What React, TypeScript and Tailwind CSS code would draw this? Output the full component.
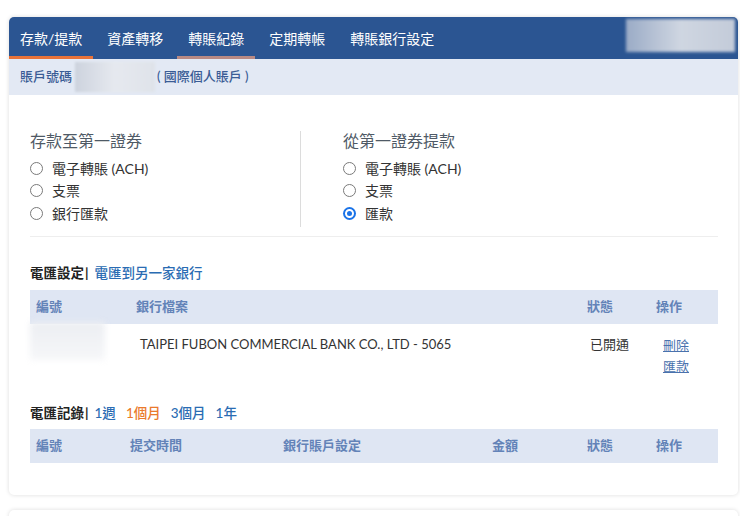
import React from "react";

const font = { fontFamily: 'Lato, "Noto Sans CJK TC", sans-serif' };

function Radio({ label, checked }: { label: string; checked?: boolean }) {
  return (
    <div className="flex items-center h-[22.5px]">
      {checked ? (
        <span className="w-[13px] h-[13px] rounded-full bg-[#1a73e8] flex items-center justify-center">
          <span className="w-[9px] h-[9px] rounded-full border-[2px] border-white bg-[#1a73e8]" />
        </span>
      ) : (
        <span className="w-[13px] h-[13px] rounded-full border border-[#7a7a7a] bg-white" />
      )}
      <span className="ml-[9px] text-[14px] text-[#333]">{label}</span>
    </div>
  );
}

export default function App() {
  const tabs = ["存款/提款", "資產轉移", "轉賬紀錄", "定期轉帳", "轉賬銀行設定"];
  return (
    <div className="w-[740px] h-[516px] bg-white overflow-hidden" style={font}>
      <div className="pt-[17px] pl-[9px] pr-[2px]">
        <div className="rounded-[5px] bg-white shadow-[0_0_4px_rgba(0,0,0,0.14)] overflow-hidden">
          {/* nav */}
          <div className="h-[42px] bg-[#2b5592] flex items-stretch gap-[3px] relative">
            {tabs.map((t, i) => (
              <div
                key={t}
                className={
                  "px-[11px] flex items-center text-[14px] text-white border-b-[3px] pt-[3px] " +
                  (i === 0
                    ? "border-[#e8733a]"
                    : i === 2
                    ? "border-[#b98a84]"
                    : "border-transparent")
                }
              >
                {t}
              </div>
            ))}
            <div className="flex-1" />
            <div className="mt-[2px] mr-[3px] w-[109px] h-[33px] bg-gradient-to-r from-[#9aabc6] via-[#cfd6e1] to-[#c3cbd9] blur-[1.5px]" />
          </div>
          {/* sub bar */}
          <div className="h-[36px] bg-[#e3e9f4] flex items-center pl-[11px] text-[13px] text-[#3a5c95] font-medium">
            <span>賬戶號碼</span>
            <span className="ml-[3px] w-[80px] h-[30px] bg-gradient-to-r from-[#cdd3de] via-[#e6e9ef] to-[#dfe3ea] blur-[1px]" />
            <span className="ml-[2px]">( 國際個人賬戶 )</span>
          </div>
          {/* body */}
          <div className="px-[21px] pr-[20px] pt-[36px] pb-[32px]">
            <div className="flex pb-[9px] border-b border-[#eeeeee]">
              <div className="w-[271px] border-r border-[#dcdcdc] pb-[2px]">
                <div className="text-[16px] text-[#4f5a66] leading-[20px] mb-[6px]">存款至第一證券</div>
                <Radio label="電子轉賬 (ACH)" />
                <Radio label="支票" />
                <Radio label="銀行匯款" />
              </div>
              <div className="pl-[42px]">
                <div className="text-[16px] text-[#4f5a66] leading-[20px] mb-[6px]">從第一證券提款</div>
                <Radio label="電子轉賬 (ACH)" />
                <Radio label="支票" />
                <Radio label="匯款" checked />
              </div>
            </div>

            {/* wire settings */}
            <div className="mt-[27px] flex items-center text-[13.5px] leading-[18px]">
              <span className="font-bold text-[#222]">電匯設定</span>
              <span className="font-bold text-[#222] ml-[1px]">|</span>
              <span className="ml-[6px] text-[#2a6cb3] font-medium">電匯到另一家銀行</span>
            </div>
            <div className="mt-[8px] h-[34px] bg-[#dfe6f3] flex items-center text-[13px] font-bold text-[#6383b8]">
              <div className="w-[100px] pl-[6px]">編號</div>
              <div className="w-[451px] pl-[6px]">銀行檔案</div>
              <div className="w-[69px] pl-[6px]">狀態</div>
              <div className="flex-1 pl-[6px]">操作</div>
            </div>
            <div className="flex h-[58px] text-[13px] text-[#333]">
              <div className="w-[100px]">
                <div className="w-[75px] h-[38px] bg-gradient-to-b from-[#eceef2] to-[#f6f7f9] blur-[3px] -mt-[2px]" />
              </div>
              <div className="w-[451px] pl-[10px] pt-[11px]">TAIPEI FUBON COMMERCIAL BANK CO., LTD - 5065</div>
              <div className="w-[69px] pl-[9px] pt-[11px]">已開通</div>
              <div className="flex-1 pl-[13px] pt-[11px] flex flex-col leading-[21px] text-[#4a72ad]">
                <span className="underline">刪除</span>
                <span className="underline">匯款</span>
              </div>
            </div>

            {/* wire records */}
            <div className="mt-[22px] flex items-center text-[13.5px] leading-[18px]">
              <span className="font-bold text-[#222]">電匯記錄</span>
              <span className="font-bold text-[#222] ml-[1px]">|</span>
              <span className="ml-[6px] text-[#2a6cb3] font-medium">1週</span>
              <span className="ml-[10px] text-[#ea7a2c] font-medium">1個月</span>
              <span className="ml-[10px] text-[#2a6cb3] font-medium">3個月</span>
              <span className="ml-[10px] text-[#2a6cb3] font-medium">1年</span>
            </div>
            <div className="mt-[7px] h-[34px] bg-[#dfe6f3] flex items-center text-[13px] font-bold text-[#6383b8]">
              <div className="w-[100px] pl-[6px]">編號</div>
              <div className="w-[153px]">提交時間</div>
              <div className="w-[209px]">銀行賬戶設定</div>
              <div className="w-[95px]">金額</div>
              <div className="w-[69px]">狀態</div>
              <div className="flex-1">操作</div>
            </div>
          </div>
        </div>
        <div className="mt-[15px] h-[40px] rounded-[5px] bg-white shadow-[0_0_4px_rgba(0,0,0,0.14)]" />
      </div>
    </div>
  );
}
